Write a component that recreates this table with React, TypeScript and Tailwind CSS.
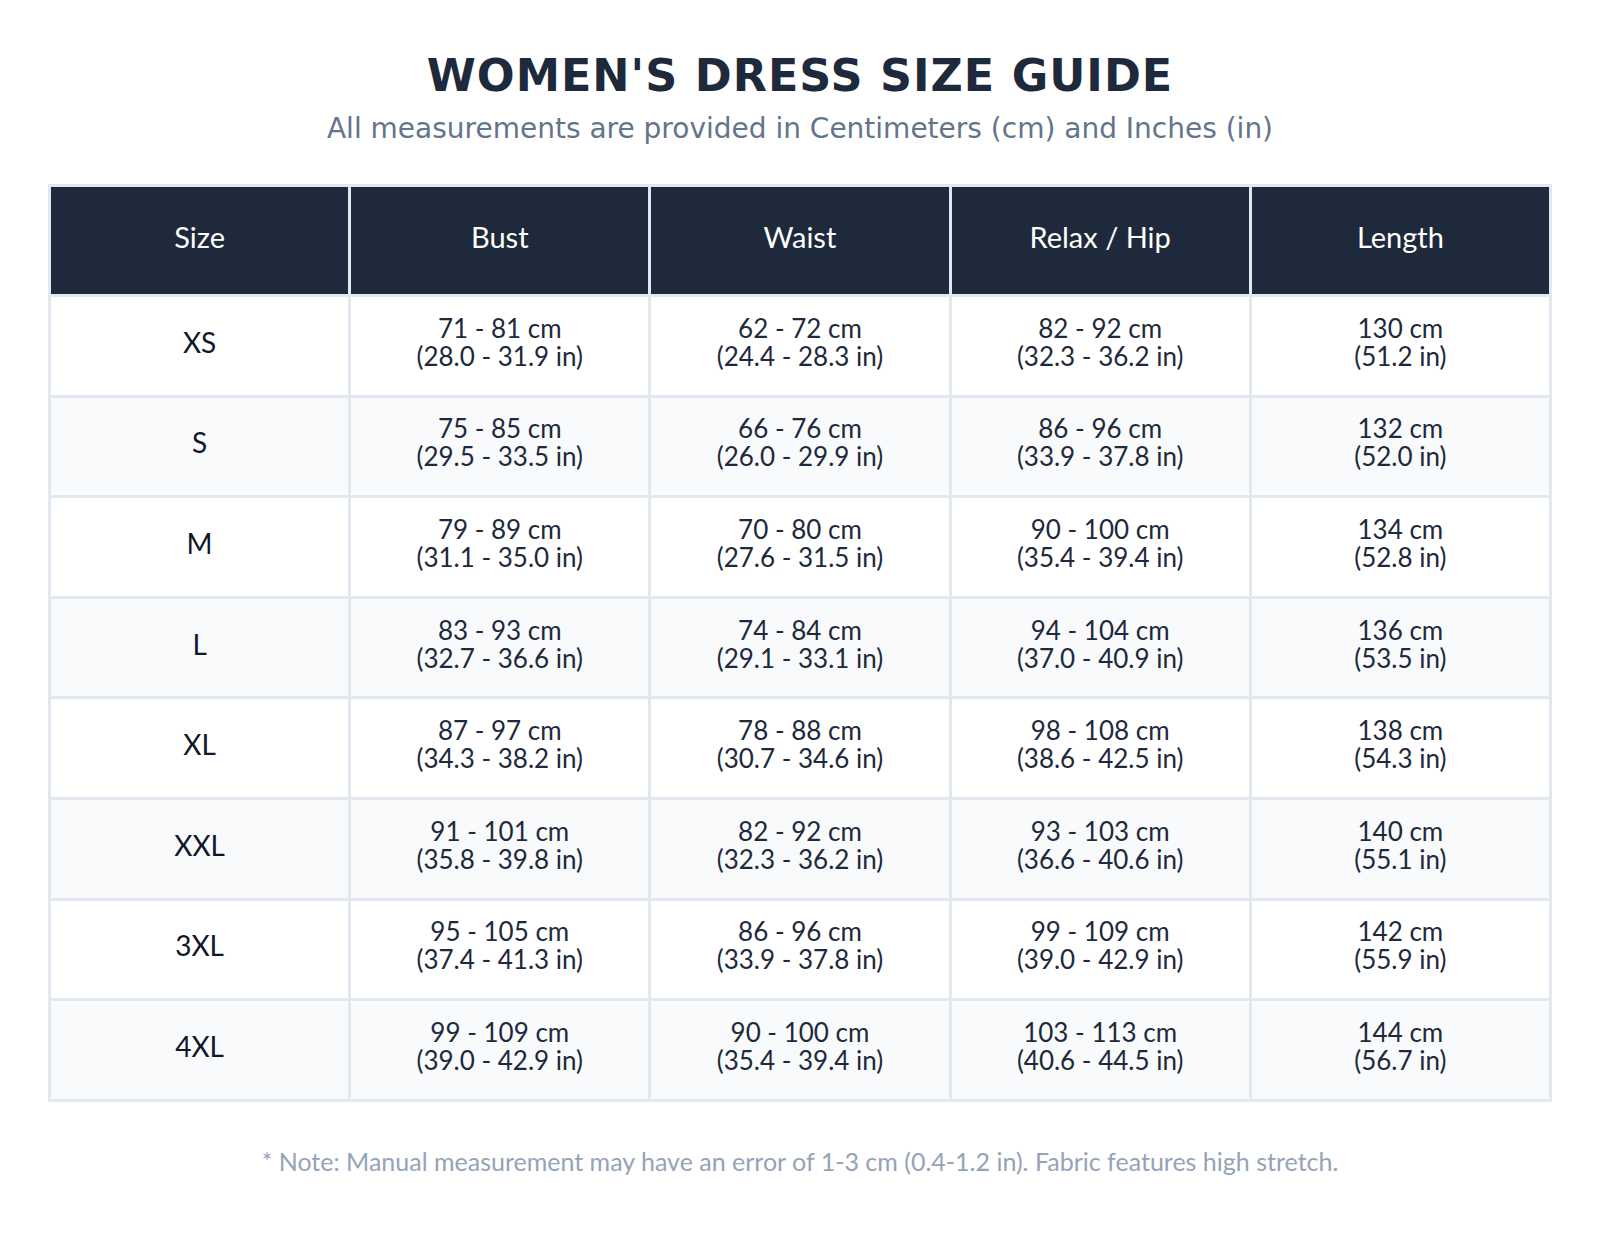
const rows = [
  ["XS", "71 - 81 cm", "(28.0 - 31.9 in)", "62 - 72 cm", "(24.4 - 28.3 in)", "82 - 92 cm", "(32.3 - 36.2 in)", "130 cm", "(51.2 in)"],
  ["S", "75 - 85 cm", "(29.5 - 33.5 in)", "66 - 76 cm", "(26.0 - 29.9 in)", "86 - 96 cm", "(33.9 - 37.8 in)", "132 cm", "(52.0 in)"],
  ["M", "79 - 89 cm", "(31.1 - 35.0 in)", "70 - 80 cm", "(27.6 - 31.5 in)", "90 - 100 cm", "(35.4 - 39.4 in)", "134 cm", "(52.8 in)"],
  ["L", "83 - 93 cm", "(32.7 - 36.6 in)", "74 - 84 cm", "(29.1 - 33.1 in)", "94 - 104 cm", "(37.0 - 40.9 in)", "136 cm", "(53.5 in)"],
  ["XL", "87 - 97 cm", "(34.3 - 38.2 in)", "78 - 88 cm", "(30.7 - 34.6 in)", "98 - 108 cm", "(38.6 - 42.5 in)", "138 cm", "(54.3 in)"],
  ["XXL", "91 - 101 cm", "(35.8 - 39.8 in)", "82 - 92 cm", "(32.3 - 36.2 in)", "93 - 103 cm", "(36.6 - 40.6 in)", "140 cm", "(55.1 in)"],
  ["3XL", "95 - 105 cm", "(37.4 - 41.3 in)", "86 - 96 cm", "(33.9 - 37.8 in)", "99 - 109 cm", "(39.0 - 42.9 in)", "142 cm", "(55.9 in)"],
  ["4XL", "99 - 109 cm", "(39.0 - 42.9 in)", "90 - 100 cm", "(35.4 - 39.4 in)", "103 - 113 cm", "(40.6 - 44.5 in)", "144 cm", "(56.7 in)"],
];

const headers = ["Size", "Bust", "Waist", "Relax / Hip", "Length"];

export default function App() {
  return (
    <div className="min-h-screen bg-white px-[48px] pt-[50px]">
      <h1 className="text-center font-['DejaVu_Sans',sans-serif] text-[44.5px] font-bold leading-[52px] tracking-[1px] text-[#1e293b]">
        WOMEN'S DRESS SIZE GUIDE
      </h1>
      <p className="mt-[9px] text-center font-['DejaVu_Sans',sans-serif] text-[28px] leading-[36px] text-[#64748b]">
        All measurements are provided in Centimeters (cm) and Inches (in)
      </p>

      <table className="mt-[37px] w-full table-fixed border-collapse border-[3px] border-[#e2e8f0] font-['Lato','Open_Sans',sans-serif]">
        <thead>
          <tr className="h-[110px] bg-[#1e293b]">
            {headers.map((h) => (
              <th key={h} className="border-[3px] border-[#e2e8f0] pb-[8px] text-center text-[29px] font-normal text-white">
                {h}
              </th>
            ))}
          </tr>
        </thead>
        <tbody>
          {rows.map((r, i) => (
            <tr key={r[0]} className={i % 2 === 0 ? "h-[100.6px] bg-white" : "h-[100.6px] bg-[#f8fafc]"}>
              <td className="border-[3px] border-[#e2e8f0] pb-[8px] text-center text-[28px] text-[#0f172a]">{r[0]}</td>
              {[1, 3, 5, 7].map((k) => (
                <td key={k} className="border-[3px] border-[#e2e8f0] pb-[8px] text-center text-[26px] leading-[28px] text-[#1e293b]">
                  {r[k]}
                  <br />
                  {r[k + 1]}
                </td>
              ))}
            </tr>
          ))}
        </tbody>
      </table>

      <p className="mt-[42px] text-center font-['Lato','Open_Sans',sans-serif] text-[25px] leading-[35px] text-[#94a3b8]">
        * Note: Manual measurement may have an error of 1-3 cm (0.4-1.2 in). Fabric features high stretch.
      </p>
    </div>
  );
}
